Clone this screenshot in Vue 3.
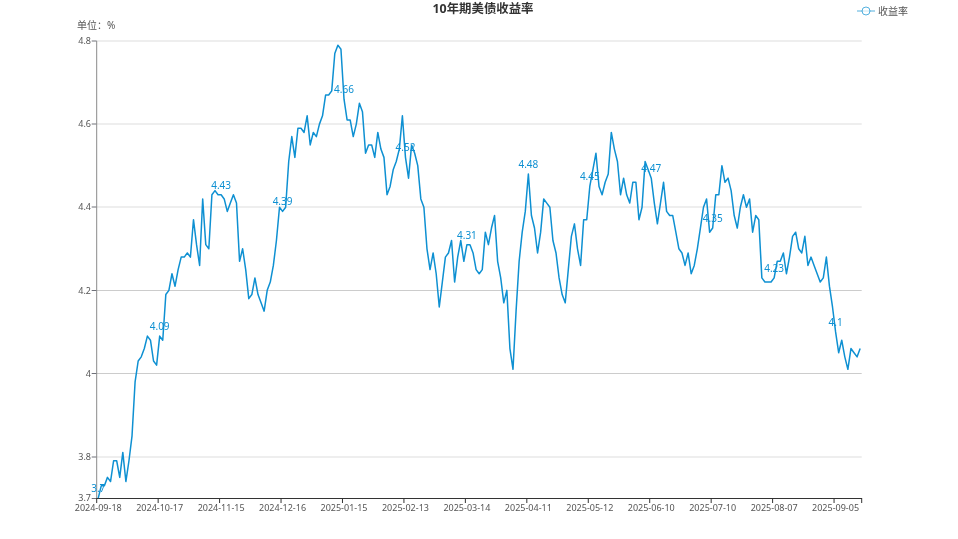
<script setup>
const values = [
  3.7,3.73,3.73,3.75,3.74,3.79,3.79,3.75,3.81,3.74,3.79,3.85,3.98,4.03,4.04,4.06,4.09,4.08,4.03,4.02,
  4.09,4.08,4.19,4.2,4.24,4.21,4.25,4.28,4.28,4.29,4.28,4.37,4.31,4.26,4.42,4.31,4.3,4.43,4.44,4.43,
  4.43,4.42,4.39,4.41,4.43,4.41,4.27,4.3,4.25,4.18,4.19,4.23,4.19,4.17,4.15,4.2,4.22,4.26,4.32,4.4,
  4.39,4.4,4.51,4.57,4.52,4.59,4.59,4.58,4.62,4.55,4.58,4.57,4.6,4.62,4.67,4.67,4.68,4.77,4.79,4.78,
  4.66,4.61,4.61,4.57,4.6,4.65,4.63,4.53,4.55,4.55,4.52,4.58,4.54,4.52,4.43,4.45,4.49,4.51,4.54,4.62,
  4.52,4.47,4.55,4.53,4.5,4.42,4.4,4.3,4.25,4.29,4.24,4.16,4.22,4.28,4.29,4.32,4.22,4.28,4.32,4.27,
  4.31,4.31,4.29,4.25,4.24,4.25,4.34,4.31,4.35,4.38,4.27,4.23,4.17,4.2,4.06,4.01,4.15,4.27,4.34,4.39,
  4.48,4.38,4.35,4.29,4.34,4.42,4.41,4.4,4.32,4.29,4.23,4.19,4.17,4.25,4.33,4.36,4.3,4.26,4.37,4.37,
  4.45,4.49,4.53,4.45,4.43,4.46,4.48,4.58,4.54,4.51,4.43,4.47,4.43,4.41,4.46,4.46,4.37,4.4,4.51,4.49,
  4.47,4.41,4.36,4.41,4.46,4.39,4.38,4.38,4.34,4.3,4.29,4.26,4.29,4.24,4.26,4.3,4.35,4.4,4.42,4.34,
  4.35,4.43,4.43,4.5,4.46,4.47,4.44,4.38,4.35,4.4,4.43,4.4,4.42,4.34,4.38,4.37,4.23,4.22,4.22,4.22,
  4.23,4.27,4.27,4.29,4.24,4.28,4.33,4.34,4.3,4.29,4.33,4.26,4.28,4.26,4.24,4.22,4.23,4.28,4.21,4.16,
  4.1,4.05,4.08,4.04,4.01,4.06,4.05,4.04,4.06
]

const left = 96.7
const right = 861.7
const band = (right - left) / values.length
const px = (i) => left + band * (i + 0.5)
const py = (v) => 41 + (4.8 - v) * 415.6

const points = values.map((v, i) => `${px(i).toFixed(2)},${py(v).toFixed(2)}`).join(' ')

const yTicks = [
  { label: '4.8', y: 41, soft: true },
  { label: '4.6', y: 124, soft: true },
  { label: '4.4', y: 207, soft: true },
  { label: '4.2', y: 290.5, soft: false },
  { label: '4', y: 373.5, soft: false },
  { label: '3.8', y: 457, soft: true }
]

const dates = [
  '2024-09-18','2024-10-17','2024-11-15','2024-12-16','2025-01-15','2025-02-13','2025-03-14',
  '2025-04-11','2025-05-12','2025-06-10','2025-07-10','2025-08-07','2025-09-05'
]
const xTicks = dates.map((label, k) => ({
  label,
  x: left + band * 20 * k,
  labelX: px(20 * k)
}))

const pointLabels = values
  .map((v, i) => ({ i, v }))
  .filter((p) => p.i % 20 === 0)
  .map((p) => ({ text: String(p.v), x: px(p.i), y: py(p.v) - 10 }))
</script>

<template>
  <div class="page">
    <svg class="chart" width="958" height="539" viewBox="0 0 958 539">
      <text class="title" x="483" y="8">10年期美债收益率</text>

      <g class="legend">
        <line x1="857" y1="11" x2="875" y2="11" />
        <circle cx="866" cy="11" r="4" />
      </g>
      <text class="legend-text" x="878" y="11">收益率</text>

      <text class="unit" x="77" y="25">单位：%</text>

      <g v-for="t in yTicks" :key="t.label">
        <line :class="['grid', { soft: t.soft }]" :x1="left" :x2="right" :y1="t.y" :y2="t.y" />
        <line class="tick" :x1="left - 5" :x2="left" :y1="t.y" :y2="t.y" />
        <text class="ylabel" x="91" :y="Math.floor(t.y) - 1 + (t.soft ? 0 : 1)">{{ t.label }}</text>
      </g>
      <text class="ylabel" x="91" y="497">3.7</text>
      <line class="tick" :x1="left - 5" :x2="left" y1="498.5" y2="498.5" />

      <line class="yaxis" :x1="left" :x2="left" y1="41" y2="498" />
      <line class="xaxis" :x1="left" :x2="right + 0.3" y1="498.5" y2="498.5" />

      <g v-for="t in xTicks" :key="t.label">
        <line class="xtick" :x1="t.x" :x2="t.x" y1="498" y2="503" />
        <text class="xlabel" :x="t.labelX" y="507">{{ t.label }}</text>
      </g>
      <line class="xtick" :x1="right" :x2="right" y1="498" y2="503" />

      <polyline class="series" :points="points" />

      <text v-for="p in pointLabels" :key="p.x" class="point-label" :x="p.x" :y="p.y">{{ p.text }}</text>
    </svg>
  </div>
</template>

<style scoped>
.page {
  width: 958px;
  height: 539px;
  background: #fff;
  overflow: hidden;
}
.chart {
  display: block;
  font-family: "Noto Sans", "Noto Sans CJK SC", sans-serif;
  will-change: transform;
}
text {
  dominant-baseline: central;
}
.title {
  font-size: 12.4px;
  font-weight: 700;
  fill: #333;
  text-anchor: middle;
}
.legend line {
  stroke: #0e90d2;
  stroke-width: 1;
  opacity: 0.7;
}
.legend circle {
  fill: #fff;
  stroke: #0e90d2;
  stroke-width: 1;
  opacity: 0.7;
}
.legend-text,
.unit {
  font-size: 10px;
  fill: #555;
}
.grid {
  stroke: #ccc;
  stroke-width: 1;
}
.grid.soft {
  stroke: #ddd;
}
.tick {
  stroke: #6e7079;
  stroke-width: 1;
}
.yaxis {
  stroke: #8a8a8a;
  stroke-width: 1;
}
.xaxis {
  stroke: #333;
  stroke-width: 1;
}
.xtick {
  stroke: #333;
  stroke-width: 1;
}
.ylabel {
  font-size: 9px;
  fill: #555;
  text-anchor: end;
}
.xlabel {
  font-size: 9px;
  fill: #555;
  text-anchor: middle;
}
.series {
  fill: none;
  stroke: #0e90d2;
  stroke-width: 1.5;
  stroke-linejoin: round;
}
.point-label {
  font-size: 10px;
  fill: #0e90d2;
  text-anchor: middle;
}
</style>
